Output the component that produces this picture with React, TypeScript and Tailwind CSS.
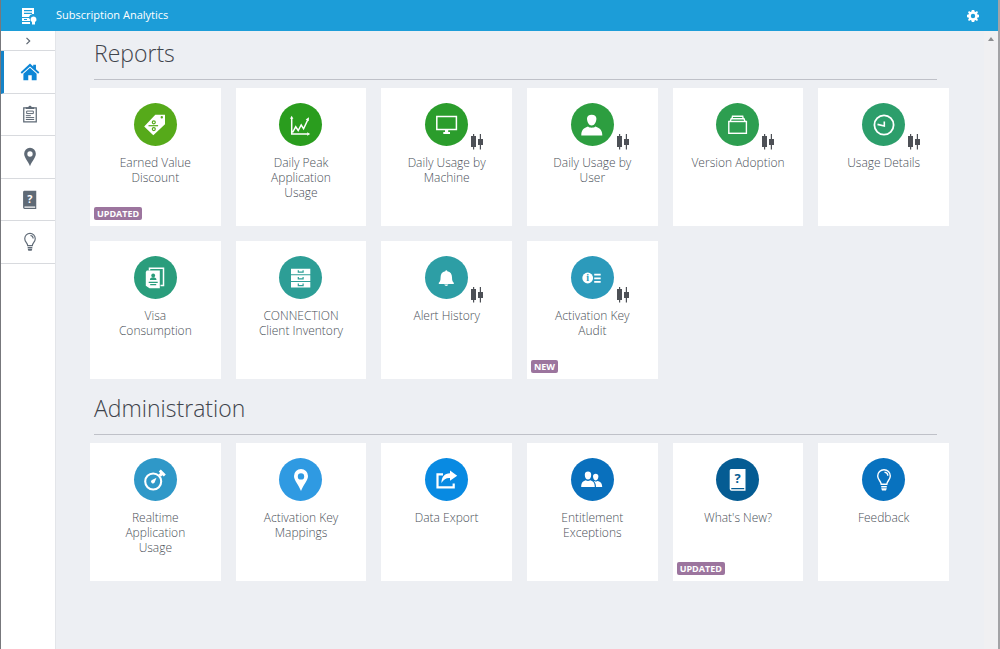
import type { ReactNode } from "react";

interface Tile {
    label: string;
    color: string;
    icon: ReactNode;
    badge?: string;
    trend?: boolean;
}

function Icon({ children }: { children: ReactNode }) {
    return (
        <svg viewBox="0 0 24 24" className="h-6 w-6" fill="currentColor" aria-hidden="true">
            {children}
        </svg>
    );
}

const pin = (
    <path fillRule="evenodd" d="M12 1a7 7 0 0 0-7 7c0 4.500 4.500 8.500 7 15 2.500-6.500 7-10.500 7-15a7 7 0 0 0-7-7zm0 4.200a3.200 3.200 0 1 1 0 6.400 3.200 3.200 0 0 1 0-6.400z" />
);

const bulb = (
    <>
        <g fill="none" stroke="currentColor" strokeWidth="1.400">
            <path d="M9.200 16.300c0-3-3.500-4.300-3.500-8.300a6.300 6.300 0 0 1 12.600 0c0 4-3.500 5.300-3.500 8.300z" />
            <path d="M12.500 4.200c2 .2 3.300 1.600 3.300 3.600" />
        </g>
        <path d="M9.200 18h5.600v1.400H9.200zM9.200 20.200h5.600l-.8 2.400h-4z" />
    </>
);

// Book cover with a question mark cut out of it
function Book({ mark }: { mark: string }) {
    return (
        <>
            <path fillRule="evenodd" d="M5 1h14.500v21.700H5.400A1.900 1.900 0 0 1 3.700 21V2.500A1.500 1.500 0 0 1 5 1zm.8 18.900c-.9 0-.9 1.400 0 1.400h12.400v-1.400z" />
            <text x="11.700" y="15" textAnchor="middle" fontSize="13" fontWeight="700" fontFamily="Open Sans, sans-serif" fill={mark}>?</text>
        </>
    );
}

const reports: Tile[] = [
    {
        label: "Earned Value Discount",
        color: "bg-[#56aa1a]",
        badge: "UPDATED",
        icon: (
            <>
                <path fillRule="evenodd" d="M12.300 1.700H22v9.500L10.300 22.300 1.200 13.500zm6.500 1.400a1.200 1.200 0 1 0 0 2.400 1.200 1.200 0 0 0 0-2.400z" />
                <g fill="none" stroke="#56aa1a" strokeWidth="1.200">
                    <path d="M5.500 12.700h9.600" />
                    <circle cx="10.800" cy="9.300" r="1.500" />
                    <circle cx="10.800" cy="16.100" r="1.500" />
                </g>
            </>
        ),
    },
    {
        label: "Daily Peak Application Usage",
        color: "bg-[#2a9d1e]",
        icon: (
            <>
                <path d="M2.700 2.800l1.700 3H1zM21.200 21l-3 1.700v-3.400zM20 4.300l-.3 4-3-1.800z" />
                <path d="M2.700 5v16h16M3.500 19.500l3.200-5.700 2.500 3.700 3-5.500 2.400 3.800L18.700 7" fill="none" stroke="currentColor" strokeWidth="1.500" />
            </>
        ),
    },
    {
        label: "Daily Usage by Machine",
        color: "bg-[#2b9d2c]",
        trend: true,
        icon: (
            <>
                <rect x="1.800" y="3.500" width="19.600" height="13" fill="none" stroke="currentColor" strokeWidth="1.500" />
                <path d="M10 17h3.200v2H15v2H8.300v-2H10z" />
            </>
        ),
    },
    {
        label: "Daily Usage by User",
        color: "bg-[#2d9e40]",
        trend: true,
        icon: (
            <path d="M7 5.500c0-2.500 1.800-3.800 4.700-3.800s4.700 1.300 4.700 3.800c0 3.600-1.900 7-4.700 7S7 9.100 7 5.500zM1.300 22.600c0-5 1.700-7.400 6.700-9 1.200 1.600 6.200 1.600 7.400 0 5 1.600 6.900 4 6.900 9z" />
        ),
    },
    {
        label: "Version Adoption",
        color: "bg-[#2d9e50]",
        trend: true,
        icon: (
            <g fill="none" stroke="currentColor" strokeWidth="1.400">
                <rect x="2.800" y="8.500" width="17.600" height="11.800" />
                <path d="M4.200 8.500l1-2.800h12.800l1 2.800M6 5.700l.5-2.500h10.200l.5 2.500" />
            </g>
        ),
    },
    {
        label: "Usage Details",
        color: "bg-[#2c9e6b]",
        trend: true,
        icon: (
            <g fill="none" stroke="currentColor">
                <circle cx="12" cy="12" r="9.600" strokeWidth="1.800" />
                <path d="M12.300 8.500V13l-6.800-1.600" strokeWidth="1.600" />
            </g>
        ),
    },
    {
        label: "Visa Consumption",
        color: "bg-[#2a9d7c]",
        icon: (
            <>
                <path d="M6.500 4.500V2.300h14v17.200h-3" fill="none" stroke="currentColor" strokeWidth="1.500" />
                <path d="M3.800 4.500h13v17.800H6.500l-3.700-2.500V6z" />
                <g fill="#2a9d7c">
                    <circle cx="10.200" cy="9.500" r="1.900" />
                    <path d="M6.900 14c0-1.900 1.200-2.700 3.300-2.700s3.300.8 3.300 2.700zM5.700 15.700h9v1.200h-9zM7.200 18.100h6v1.200h-6z" />
                </g>
            </>
        ),
    },
    {
        label: "CONNECTION Client Inventory",
        color: "bg-[#2d9e96]",
        icon: (
            <>
                <path d="M2 2.700h19.300v5.600H2zM2 9.300h19.300v5.600H2zM2 16h19.300v5.600H2z" />
                <path d="M9.300 4.200v2h4.800v-2M9.300 10.900v2h4.800v-2M9.300 17.600v2h4.800v-2" fill="none" stroke="#2d9e96" strokeWidth="1.200" />
            </>
        ),
    },
    {
        label: "Alert History",
        color: "bg-[#2d9ea5]",
        trend: true,
        icon: (
            <path d="M10.300 5.200a1 1 0 0 1 2 0c3.300.6 4.700 3 4.700 6 0 3.500.7 4.500 1.800 5.500v1.200h-15v-1.200c1.100-1 1.800-2 1.800-5.500 0-3 1.400-5.400 4.700-6zM9.300 18.600h4c-.4 1.900-3.600 1.900-4 0z" />
        ),
    },
    {
        label: "Activation Key Audit",
        color: "bg-[#2c9abb]",
        badge: "NEW",
        trend: true,
        icon: (
            <>
                <circle cx="7.700" cy="12" r="5.400" />
                <path d="M14.200 7.800h6.500v1.800h-6.500zM14.200 11.400h6.500v1.800h-6.500zM14.200 15h6.500v1.800h-6.500z" />
                <text x="7.700" y="15.300" textAnchor="middle" fontSize="10" fontWeight="700" fontFamily="Liberation Serif, serif" fill="#2c9abb">i</text>
            </>
        ),
    },
];

const administration: Tile[] = [
    {
        label: "Realtime Application Usage",
        color: "bg-[#2f98c8]",
        icon: (
            <>
                <circle cx="10.200" cy="13.500" r="8" fill="none" stroke="currentColor" strokeWidth="2.100" />
                <path d="M13.500 9.800l-2 4.900a1.900 1.900 0 0 1-3-2.500zM15.600 6.400l1.500-1.500-1.300-1.300 2-2 5 5-2 2-1.400-1.400-1.500 1.500z" />
            </>
        ),
    },
    { label: "Activation Key Mappings", color: "bg-[#2f9ae2]", icon: pin },
    {
        label: "Data Export",
        color: "bg-[#088ae2]",
        icon: (
            <>
                <path d="M8 6.400H2.500v13h16.200v-4" fill="none" stroke="currentColor" strokeWidth="2.200" />
                <path d="M15 2.600l7.200 5.200-7.200 5V10c-4-.2-6 1.200-8.600 5 .2-6 3-9.400 8.600-9.700z" />
            </>
        ),
    },
    {
        label: "Entitlement Exceptions",
        color: "bg-[#0970bd]",
        icon: (
            <>
                <path d="M4.800 6.700c0-2.100 1.300-3.200 3.200-3.200s3.200 1.100 3.200 3.200c0 2.700-1.300 4.900-3.200 4.900S4.800 9.400 4.800 6.700zM1.200 19c0-4 1.200-5.700 4.600-6.800 1 1 3.400 1 4.400 0 3.400 1.100 4.600 2.800 4.600 6.800z" />
                <path d="M13 8.300c0-1.700 1.100-2.600 2.700-2.600s2.700.9 2.700 2.600c0 2.300-1.100 4.100-2.700 4.100S13 10.600 13 8.300zM16 19c0-2.700-.8-4.500-2.200-5.700l.4-.3c.9.700 2.300.7 3.100 0 3.600.9 4.900 2.500 4.900 6z" />
            </>
        ),
    },
    { label: "What's New?", color: "bg-[#055c93]", badge: "UPDATED", icon: <Book mark="#055c93" /> },
    { label: "Feedback", color: "bg-[#0872bf]", icon: bulb },
];

const navItems = [
    {
        label: "Home",
        active: true,
        icon: <path d="M12 2.800l3.500 3.300V4h3v4.900l3.700 3.500-1.300 1.500L12 5.900l-8.900 8-1.300-1.500zM12 7.400l7.200 6.500V21h-5.300v-5.500h-3.800V21H4.800v-7.100z" />,
    },
    {
        label: "Reports",
        icon: (
            <>
                <path d="M4.500 4.500h15v17h-15z" fill="none" stroke="currentColor" strokeWidth="1.500" />
                <path d="M7 4h2.800c.4-2.500 4-2.500 4.400 0H17v2H7z" />
                <path d="M8 8.500h8v3H8zM7 14h6M7 16.300h10M7 18.600h10" fill="none" stroke="currentColor" strokeWidth="1.200" />
            </>
        ),
    },
    { label: "Mappings", icon: pin },
    { label: "What's New", icon: <Book mark="#ffffff" /> },
    { label: "Feedback", icon: bulb },
];

function Candles() {
    return (
        <svg viewBox="0 0 12 16" className="absolute top-[31px] left-[46px] h-4 w-3 text-[#4d5056]" fill="currentColor" aria-hidden="true">
            <path d="M2 0h1.200v2H5v11H3.200v2.500H2V13H0V2h2zM8.800 0H10v5h2v6h-2v4.500H8.800V11H7V5h1.800z" />
        </svg>
    );
}

function TileCard({ tile }: { tile: Tile }) {
    return (
        <a href="#" className="relative flex h-[138px] flex-col items-center bg-white px-[18px] pt-[15px]">
            <span className={`relative flex h-[43px] w-[43px] shrink-0 items-center justify-center rounded-full text-white ${tile.color}`}>
                <Icon>{tile.icon}</Icon>
                {tile.trend && <Candles />}
            </span>
            <span className="mt-[9px] text-center text-[12px] leading-[15px] font-light text-[#4a5058]">{tile.label}</span>
            {tile.badge && (
                <span className="absolute bottom-[6px] left-1 rounded-xs bg-[#9c759e] px-[3px] text-[9px] leading-[13px] font-bold text-white">
                    {tile.badge}
                </span>
            )}
        </a>
    );
}

function Section({ title, tiles }: { title: string; tiles: Tile[] }) {
    return (
        <section>
            <h2 className="mr-3 ml-1 h-[49px] border-b border-[#bfc1c8] text-[23px] leading-[44px] font-light text-[#3f444c]">{title}</h2>
            <div className="mt-2 grid grid-cols-6 gap-[15px]">
                {tiles.map((tile) => (
                    <TileCard key={tile.label} tile={tile} />
                ))}
            </div>
        </section>
    );
}

export default function App() {
    return (
        <div className="flex min-h-screen flex-col border-r-2 border-l border-r-[#a3a3a6] border-l-[#77787c] bg-[#edeff3] font-['Open_Sans',sans-serif]">
            <header className="flex h-[31px] items-center bg-[#1c9dd8] pr-[18px] text-white">
                <div className="flex w-[55px] justify-center">
                    <svg viewBox="0 0 18 18" className="h-[18px] w-[18px]" fill="currentColor" aria-hidden="true">
                        <path fillRule="evenodd" d="M2 1h12v6h-1.500a4 4 0 0 0-3.500 3H2zm2 2v1.200h8V3zm0 2.800V7h8V5.800zM2 11h7l1 1.500V14H2zM4 12v1h3v-1zM2 15h8v2H2z" />
                        <path d="M13.500 9.500a3 3 0 0 1 1.500 5.600v2.400h-3v-2.400a3 3 0 0 1 1.500-5.600z" />
                    </svg>
                </div>
                <h1 className="flex-1 text-[11px]">Subscription Analytics</h1>
                <button type="button" aria-label="Settings">
                    <svg viewBox="0 0 14 14" className="h-[14px] w-[14px]" fill="currentColor" aria-hidden="true">
                        <path fillRule="evenodd" d="M5.800 1h2.400l.4 1.500 1 .4L11 2.100 12 3.200l-.9 1.300.4 1 1.500.3v2.400l-1.500.4-.4 1 .9 1.300-1.100 1.100-1.300-.9-1 .4L8.200 13H5.800l-.4-1.500-1-.4-1.300.9L2 10.900l.9-1.300-.4-1L1 8.200V5.800l1.500-.3.4-1L2 3.200 3.100 2.100l1.300.8 1-.4zM7 4.800a2.200 2.200 0 1 0 0 4.400 2.200 2.200 0 0 0 0-4.400z" />
                    </svg>
                </button>
            </header>

            <div className="flex flex-1">
                <aside className="w-[55px] shrink-0 border-r border-[#e3e5e9] bg-white">
                    <button type="button" aria-label="Expand menu" className="flex h-5 w-full items-center justify-center border-b border-[#d8dade] text-[#5f6873]">
                        <svg viewBox="0 0 8 8" className="h-2 w-2" fill="none" stroke="currentColor" strokeWidth="1.200" aria-hidden="true">
                            <path d="M2.500 .8L5.700 4 2.500 7.200" />
                        </svg>
                    </button>
                    <nav className="grid h-[213px] grid-rows-5">
                        {navItems.map((item) => (
                            <a
                                key={item.label}
                                href="#"
                                aria-label={item.label}
                                className={`flex items-center justify-center border-b border-b-[#d8dade] ${item.active ? "border-l-3 border-l-[#1483c8] text-[#0d86d6]" : "pl-[3px] text-[#5f6a76]"}`}
                            >
                                <svg viewBox="0 0 24 24" className={item.active ? "h-[22px] w-[22px]" : "h-5 w-5"} fill="currentColor" aria-hidden="true">
                                    {item.icon}
                                </svg>
                            </a>
                        ))}
                    </nav>
                </aside>

                <main className="flex-1 space-y-[7px] pr-[35px] pb-8 pl-[34px]">
                    <Section title="Reports" tiles={reports} />
                    <Section title="Administration" tiles={administration} />
                </main>

                {/* Scrollbar track */}
                <div className="flex w-[14px] shrink-0 justify-center bg-[#f0f0f2] pt-[6px]">
                    <svg viewBox="0 0 6 4" className="h-1 w-[6px] text-[#8b8d90]" fill="currentColor" aria-hidden="true">
                        <path d="M3 0l3 4H0z" />
                    </svg>
                </div>
            </div>
        </div>
    );
}
